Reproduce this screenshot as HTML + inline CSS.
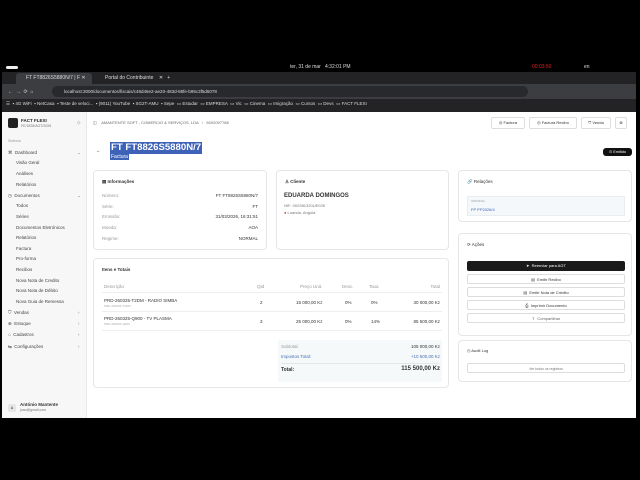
<!DOCTYPE html>
<html><head><meta charset="utf-8"><style>
*{box-sizing:border-box;margin:0;padding:0}
body{width:640px;height:480px;background:#000;font-family:"Liberation Sans",sans-serif;position:relative;overflow:hidden;color:#222}
.a{position:absolute}
.t{font-size:5px;color:#ddd;white-space:nowrap}
.card{position:absolute;background:#fff;border:1px solid #e6e6e6;border-radius:4px}
.s{font-size:4.5px;color:#777;white-space:nowrap;position:absolute}
.d{font-size:4.5px;color:#333;white-space:nowrap;position:absolute}
.btn{position:absolute;border:1px solid #ddd;border-radius:2px;background:#fff;font-size:4px;text-align:center;line-height:10px;color:#333}
.sb{position:absolute;left:8px;font-size:4.5px;color:#444;white-space:nowrap}
.sb.i{left:16px}
</style></head><body>
<div class="a t" style="left:290px;top:64px">ter, 31 de mar &nbsp; 4:32:01 PM</div>
<div class="a" style="left:6px;top:66px;width:12px;height:3px;background:#eee;border-radius:2px"></div>
<div class="a t" style="left:532px;top:64px;color:#d22">00:03:50</div>
<div class="a t" style="left:584px;top:64px">en</div>
<div class="a" style="left:2px;top:72px;width:634px;height:40px;background:#232326"></div>
<div class="a" style="left:16px;top:73px;width:76px;height:11px;background:#3c3d41;border-radius:3px 3px 0 0"></div>
<div class="a t" style="left:26px;top:75px">FT FT8826S5880N/7 | F ✕</div>
<div class="a t" style="left:105px;top:75px">Portal do Contribuinte &nbsp;&nbsp; ✕ &nbsp; +</div>
<div class="a" style="left:2px;top:84px;width:634px;height:15px;background:#3c3d41"></div>
<div class="a" style="left:52px;top:86px;width:476px;height:11px;background:#28292c;border-radius:6px"></div>
<div class="a t" style="left:8px;top:89px">←&nbsp; →&nbsp; ⟳&nbsp; ⌂</div>
<div class="a t" style="left:64px;top:89px;font-size:4.5px">localhost:3000/documentos/fiscais/c48d46e2-ae20-483d-88fe-b95c3f5d6078</div>
<div class="a t" style="left:6px;top:101px;font-size:4.5px">☰ &nbsp;▪ 4G WiFi &nbsp;▪ NetCasa &nbsp;▪ Teste de veloci... &nbsp;▪ (9011) YouTube &nbsp;▪ SG2T-AMU &nbsp;▪ Sepe &nbsp;▭ Estudar &nbsp;▭ EMPRESA &nbsp;▭ Vic &nbsp;▭ Cinema &nbsp;▭ Imigração &nbsp;▭ Cursos &nbsp;▭ Devs &nbsp;▭ FACT FLEXI</div>
<div class="a" style="left:2px;top:112px;width:634px;height:306px;background:#fff"></div>
<div class="a" style="left:2px;top:112px;width:85px;height:306px;background:#f7f7f7;border-right:1px solid #e8e8e8"></div>
<div class="a" style="left:8px;top:118px;width:10px;height:10px;background:#222;border-radius:2px"></div>
<div class="a" style="left:21px;top:118px;font-size:4.5px;font-weight:bold">FACT FLEXI</div>
<div class="s" style="left:21px;top:124px;font-size:3.5px">FE/1828/AGT/2026</div>
<div class="s" style="left:77px;top:120px">◇</div>
<div class="s" style="left:8px;top:139px;font-size:3.5px;color:#999">Sistema</div>
<div class="sb" style="top:150px">⌘ &nbsp;Dashboard</div>
<div class="sb i" style="top:160px">Visão Geral</div>
<div class="sb i" style="top:171px">Análises</div>
<div class="sb i" style="top:182px">Relatórios</div>
<div class="sb" style="top:193px">◷ &nbsp;Documentos</div>
<div class="sb i" style="top:203px">Todos</div>
<div class="sb i" style="top:214px">Séries</div>
<div class="sb i" style="top:225px">Documentos Eletrónicos</div>
<div class="sb i" style="top:235px">Relatórios</div>
<div class="sb i" style="top:246px">Factura</div>
<div class="sb i" style="top:256px">Pro-forma</div>
<div class="sb i" style="top:267px">Recibos</div>
<div class="sb i" style="top:278px">Nova Nota de Credito</div>
<div class="sb i" style="top:288px">Nova Nota de Débito</div>
<div class="sb i" style="top:299px">Nova Guia de Remessa</div>
<div class="sb" style="top:310px">⛉ &nbsp;Vendas</div>
<div class="sb" style="top:321px">⊕ &nbsp;Estoque</div>
<div class="sb" style="top:332px">⌂ &nbsp;Cadastros</div>
<div class="sb" style="top:344px">⇆ &nbsp;Configurações</div>
<div class="s" style="left:77px;top:150px">⌄</div><div class="s" style="left:77px;top:193px">⌄</div>
<div class="s" style="left:78px;top:310px">›</div><div class="s" style="left:78px;top:321px">›</div><div class="s" style="left:78px;top:332px">›</div><div class="s" style="left:78px;top:344px">›</div>
<div class="a" style="left:8px;top:404px;width:8px;height:8px;background:#e6e6e6;border-radius:2px;font-size:3.5px;text-align:center;line-height:8px">A</div>
<div class="d" style="left:20px;top:402px;font-weight:bold">António Mantente</div>
<div class="s" style="left:20px;top:408px;font-size:3.5px">joao@gmail.com</div>
<div class="d" style="left:93px;top:120px;color:#666;font-size:4px">◫ &nbsp;&nbsp;&nbsp;AMANTENTE SOFT - COMERCIO &amp; SERVIÇOS, LDA &nbsp;&nbsp;› &nbsp;&nbsp;5002097788</div>
<div class="btn" style="left:491px;top:117px;width:34px;height:12px">◎ Factura</div>
<div class="btn" style="left:529px;top:117px;width:48px;height:12px">◎ Factura Recibo</div>
<div class="btn" style="left:581px;top:117px;width:30px;height:12px">⛉ Venda</div>
<div class="btn" style="left:615px;top:117px;width:12px;height:12px">⊗</div>
<div class="d" style="left:96px;top:148px">←</div>
<div class="a" style="left:110px;top:142px;background:#3d62b8;color:#fff;font-size:9.6px;font-weight:bold;padding:0 1px;line-height:12px">FT FT8826S5880N/7</div>
<div class="a" style="left:110px;top:154px;background:#3d62b8;color:#fff;font-size:5px;padding:0 1px;line-height:6px">Factura</div>
<div class="a" style="left:603px;top:148px;width:29px;height:8px;background:#111;border-radius:3px;color:#fff;font-size:3.8px;text-align:center;line-height:8px">⊙ Emitido</div>
<div class="card" style="left:93px;top:170px;width:174px;height:80px">
<div class="d" style="left:8px;top:8px;font-weight:bold">▤ Informações</div>
<div class="s" style="left:8px;top:22px;color:#999">Número:</div><div class="d" style="right:8px;top:22px">FT FT8826S5880N/7</div>
<div class="s" style="left:8px;top:33px;color:#999">Série:</div><div class="d" style="right:8px;top:33px">FT</div>
<div class="s" style="left:8px;top:43px;color:#999">Emissão:</div><div class="d" style="right:8px;top:43px">31/03/2026, 16:31:51</div>
<div class="s" style="left:8px;top:54px;color:#999">Moeda:</div><div class="d" style="right:8px;top:54px">AOA</div>
<div class="s" style="left:8px;top:65px;color:#999">Regime:</div><div class="d" style="right:8px;top:65px">NORMAL</div>
</div>
<div class="card" style="left:276px;top:170px;width:173px;height:80px">
<div class="d" style="left:8px;top:8px;font-weight:bold">♙ Cliente</div>
<div class="d" style="left:7px;top:22px;font-size:6px;font-weight:bold">EDUARDA DOMINGOS</div>
<div class="s" style="left:7px;top:32px;font-size:4px">NIF: 002981320UE035</div>
<div class="s" style="left:7px;top:39px;font-size:4px"><span style="color:#d33">●</span> Luanda, Angola</div>
</div>
<div class="card" style="left:93px;top:258px;width:356px;height:130px">
<div class="d" style="left:8px;top:8px;font-weight:bold">Itens e Totais</div>
<div class="s" style="left:10px;top:25px;color:#999">Descrição</div><div class="s" style="left:163px;top:25px;color:#999">Qtd</div><div class="s" style="left:206px;top:25px;color:#999">Preço Unit.</div><div class="s" style="left:248px;top:25px;color:#999">Desc.</div><div class="s" style="left:275px;top:25px;color:#999">Taxa</div><div class="s" style="right:8px;top:25px;color:#999">Total</div>
<div class="a" style="left:8px;top:33px;width:340px;border-top:1px solid #eee"></div>
<div class="d" style="left:10px;top:39px">PRD-260325-T2DM - RADIO SIMBA</div><div class="s" style="left:10px;top:45px;font-size:3px;color:#aaa">PRD-260325-T2DM</div>
<div class="d" style="left:166px;top:41px">2</div><div class="d" style="left:202px;top:41px">15 000,00 Kz</div><div class="d" style="left:251px;top:41px">0%</div><div class="d" style="left:277px;top:41px">0%</div><div class="d" style="right:8px;top:41px">30 000,00 Kz</div>
<div class="a" style="left:8px;top:52px;width:340px;border-top:1px solid #eee"></div>
<div class="d" style="left:10px;top:57px">PRD-260325-Q900 - TV PLASMA</div><div class="s" style="left:10px;top:63px;font-size:3px;color:#aaa">PRD-260325-Q900</div>
<div class="d" style="left:166px;top:60px">3</div><div class="d" style="left:202px;top:60px">25 000,00 Kz</div><div class="d" style="left:251px;top:60px">0%</div><div class="d" style="left:277px;top:60px">14%</div><div class="d" style="right:8px;top:60px">85 500,00 Kz</div>
<div class="a" style="left:8px;top:71px;width:340px;border-top:1px solid #eee"></div>
<div class="a" style="left:184px;top:81px;width:164px;height:42px;background:#f6f9fa"></div>
<div class="s" style="left:187px;top:85px;color:#999">Subtotal:</div><div class="d" style="right:8px;top:85px">105 000,00 Kz</div>
<div class="s" style="left:187px;top:95px;color:#4a6fb3">Impostos Total:</div><div class="s" style="right:8px;top:95px;color:#4a6fb3">+10 500,00 Kz</div>
<div class="a" style="left:187px;top:104px;width:158px;border-top:1px solid #e6e6e6"></div>
<div class="d" style="left:187px;top:108px;font-weight:bold;font-size:5px">Total:</div><div class="d" style="right:8px;top:107px;font-weight:bold;font-size:6px">115 500,00 Kz</div>
</div>
<div class="card" style="left:458px;top:170px;width:174px;height:52px">
<div class="d" style="left:8px;top:8px">🔗 Relações</div>
<div class="a" style="left:8px;top:25px;width:158px;height:20px;background:#f4f8fa;border:1px solid #e8eef0"></div>
<div class="s" style="left:12px;top:28px;font-size:3px;color:#999">ORIGINAL</div>
<div class="s" style="left:12px;top:36px;font-size:4px;color:#3d62b8">FP PP2026/4</div>
</div>
<div class="card" style="left:458px;top:233px;width:174px;height:103px">
<div class="d" style="left:8px;top:8px">⟳ Ações</div>
<div class="a" style="left:8px;top:27px;width:158px;height:10px;background:#1a1a1a;border-radius:2px;color:#fff;font-size:4px;text-align:center;line-height:10px">➤ &nbsp;Reenviar para AGT</div>
<div class="btn" style="left:8px;top:40px;width:158px;height:10px">▤ &nbsp;Emitir Recibo</div>
<div class="btn" style="left:8px;top:53px;width:158px;height:10px">▤ &nbsp;Emitir Nota de Crédito</div>
<div class="btn" style="left:8px;top:66px;width:158px;height:10px">⎙ &nbsp;Imprimir Documento</div>
<div class="btn" style="left:8px;top:79px;width:158px;height:10px;color:#666">⇪ &nbsp;Compartilhar</div>
</div>
<div class="card" style="left:458px;top:340px;width:174px;height:42px">
<div class="d" style="left:8px;top:7px;font-size:4px">◷ Audit Log</div>
<div class="btn" style="left:8px;top:22px;width:158px;height:10px;color:#777;font-size:3.5px">Ver todos os registros</div>
</div>
</body></html>
